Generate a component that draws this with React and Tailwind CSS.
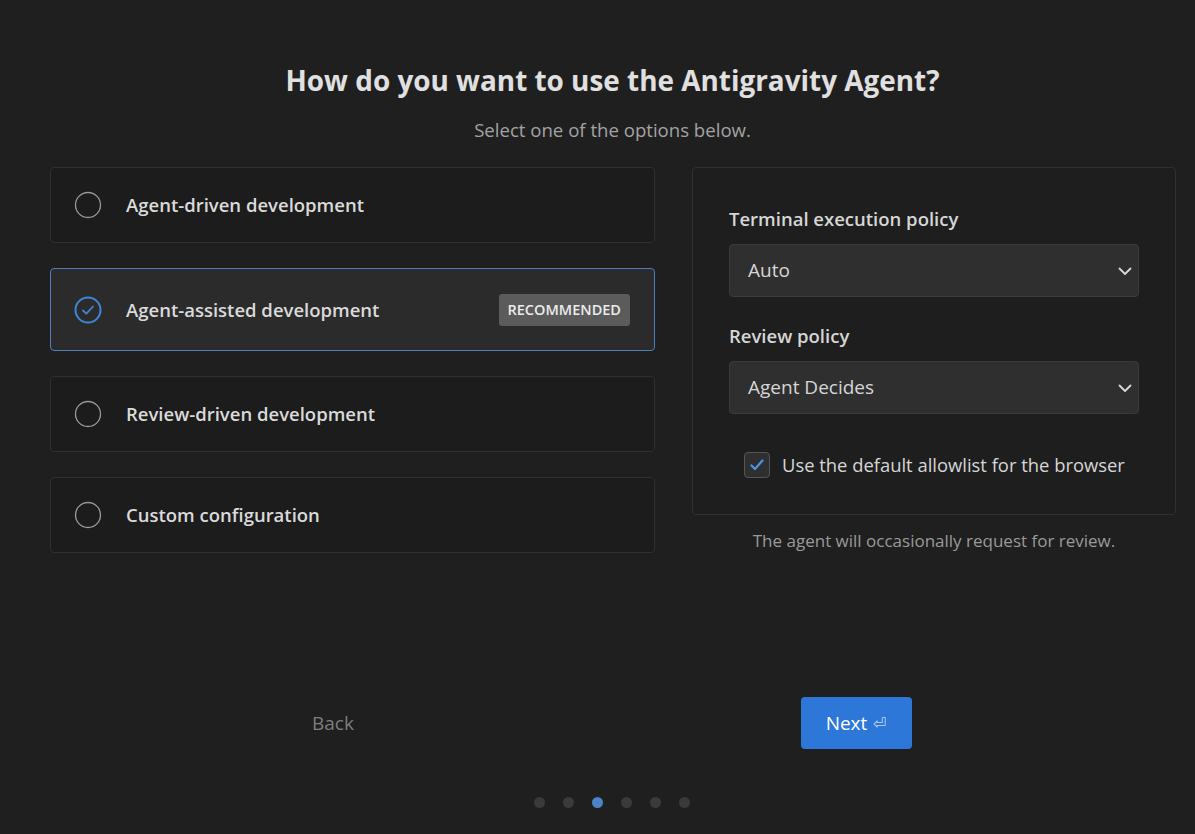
import { useState } from "react";

const options = [
  { id: "driven", label: "Agent-driven development" },
  { id: "assisted", label: "Agent-assisted development", badge: "RECOMMENDED" },
  { id: "review", label: "Review-driven development" },
  { id: "custom", label: "Custom configuration" },
];

function Chevron() {
  return (
    <svg width="16" height="16" viewBox="0 0 16 16" fill="none">
      <path d="M2.5 5.5L8 11l5.5-5.5" stroke="#d8d8d8" strokeWidth="1.8" strokeLinecap="round" strokeLinejoin="round" />
    </svg>
  );
}

function Radio({ checked }) {
  if (checked) {
    return (
      <svg width="28" height="28" viewBox="0 0 28 28" fill="none" className="shrink-0">
        <circle cx="14" cy="14" r="12.5" stroke="#3f86d8" strokeWidth="2" />
        <path d="M9 14.5l3.3 3.2L19 10.5" stroke="#3f86d8" strokeWidth="1.8" strokeLinecap="round" strokeLinejoin="round" />
      </svg>
    );
  }
  return (
    <svg width="28" height="28" viewBox="0 0 28 28" fill="none" className="shrink-0">
      <circle cx="14" cy="14" r="12.5" stroke="#9a9a9a" strokeWidth="1.3" />
    </svg>
  );
}

function Select({ value }) {
  return (
    <div className="h-[53px] w-full rounded-[4px] border border-[#3b3b3b] bg-[#2f2f2f] pl-[18px] pr-[5px] flex items-center justify-between">
      <span className="text-[19px] text-[#d6d6d6]">{value}</span>
      <Chevron />
    </div>
  );
}

export default function App() {
  const [selected, setSelected] = useState("assisted");

  return (
    <div
      className="w-[1195px] h-[834px] bg-[#1f1f1f] text-[#d8d8d8] flex flex-col overflow-hidden"
      style={{ fontFamily: '"Open Sans", "Noto Sans", sans-serif' }}
    >
      <div className="pl-[30px]">
        <h1 className="mt-[61px] text-center text-[27.9px] leading-[38px] font-bold text-[#e0e0e0]">
          How do you want to use the Antigravity Agent?
        </h1>
        <p className="mt-[19px] text-center text-[18.6px] leading-[24px] text-[#a3a3a3]">
          Select one of the options below.
        </p>
      </div>

      <div className="mt-[25px] pl-[50px] flex gap-[37px]">
        <div className="w-[605px] flex flex-col gap-[25px]">
          {options.map((o) => {
            const on = selected === o.id;
            return (
              <button
                key={o.id}
                onClick={() => setSelected(o.id)}
                className={
                  on
                    ? "h-[83px] rounded-[4px] border border-[#4b7fc0] bg-[#2b2b2b] pl-[23px] pr-[24px] flex items-center text-left"
                    : "h-[76px] rounded-[4px] border border-[#303030] bg-[#1c1c1c] pl-[23px] pr-[24px] flex items-center text-left"
                }
              >
                <Radio checked={on} />
                <span className="ml-[24px] text-[18.5px] font-semibold text-[#dadada]">{o.label}</span>
                {o.badge && (
                  <span className="ml-auto h-[32px] px-[9px] rounded-[3px] bg-[#5b5b5b] text-[14.5px] font-semibold text-[#ececec] flex items-center">
                    {o.badge}
                  </span>
                )}
              </button>
            );
          })}
        </div>

        <div className="w-[484px] flex flex-col">
          <div className="h-[348px] rounded-[4px] border border-[#303030] bg-[#1e1e1e] px-[36px] pt-[39px]">
            <div className="text-[18.5px] leading-[24px] font-semibold text-[#d6d6d6]">Terminal execution policy</div>
            <div className="mt-[13px]">
              <Select value="Auto" />
            </div>
            <div className="mt-[27px] text-[18.5px] leading-[24px] font-semibold text-[#d6d6d6]">Review policy</div>
            <div className="mt-[13px]">
              <Select value="Agent Decides" />
            </div>
            <label className="mt-[37px] ml-[15px] flex items-center gap-[12px]">
              <span className="w-[26px] h-[26px] rounded-[4px] border border-[#555] bg-[#2f2f2f] flex items-center justify-center">
                <svg width="18" height="18" viewBox="0 0 18 18" fill="none">
                  <path d="M3.5 9.5l3.5 3.5L14.5 4.5" stroke="#4c95e6" strokeWidth="2.2" strokeLinecap="round" strokeLinejoin="round" />
                </svg>
              </span>
              <span className="text-[18.4px] text-[#d6d6d6]">Use the default allowlist for the browser</span>
            </label>
          </div>
          <p className="mt-[15px] text-center text-[17px] leading-[22px] text-[#9a9a9a]">
            The agent will occasionally request for review.
          </p>
        </div>
      </div>

      <div className="mt-auto mb-[48px] flex justify-center gap-[323px] pr-[6px]">
        <div className="w-[200px] flex justify-center items-center">
          <button className="text-[19px] text-[#7d7d7d]">Back</button>
        </div>
        <div className="w-[200px] flex justify-center items-center">
          <button className="w-[111px] h-[52px] rounded-[4px] bg-[#2d77d8] text-white text-[19px] flex items-center justify-center gap-[6px]">
            Next <span className="text-[16px] text-[#bcd6f5]">⏎</span>
          </button>
        </div>
      </div>

      <div className="mb-[26px] flex justify-center gap-[18px] pl-[29px]">
        {[0, 1, 2, 3, 4, 5].map((i) => (
          <span
            key={i}
            className={i === 2 ? "w-[11px] h-[11px] rounded-full bg-[#4a84c8]" : "w-[11px] h-[11px] rounded-full bg-[#3a3a3a]"}
          />
        ))}
      </div>
    </div>
  );
}
